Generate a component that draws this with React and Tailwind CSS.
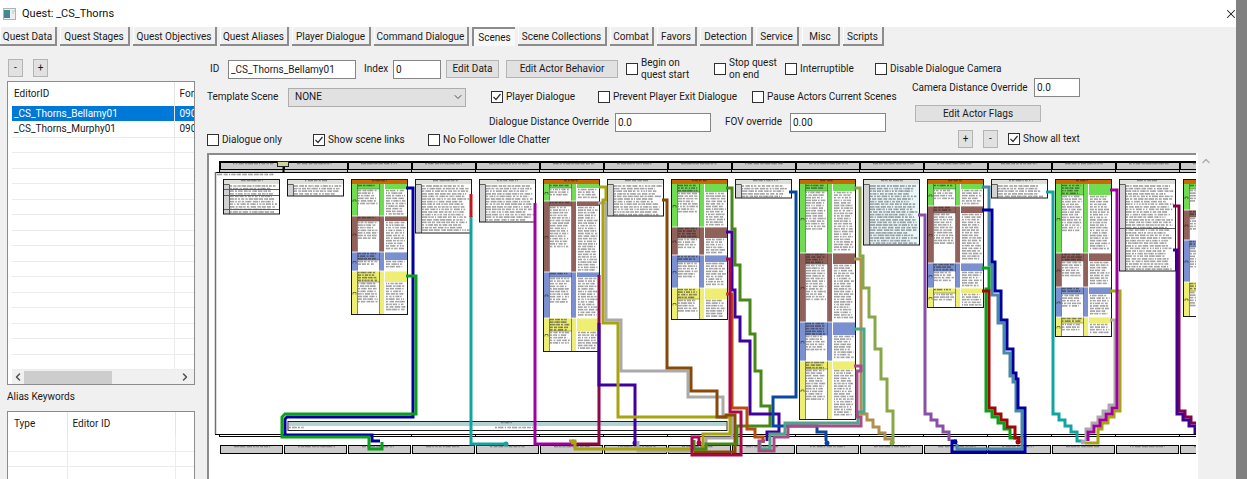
import { ChevronDown, ChevronLeft, ChevronRight, ChevronUp, X } from 'lucide-react'

const TABS = [
  { name: 'Quest Data', width: 'w-[57px]' },
  { name: 'Quest Stages', width: 'w-[70px]' },
  { name: 'Quest Objectives', width: 'w-[84px]' },
  { name: 'Quest Aliases', width: 'w-[69px]' },
  { name: 'Player Dialogue', width: 'w-[79px]' },
  { name: 'Command Dialogue', width: 'w-[95px]' },
  { name: 'Scenes', width: 'w-[43px]', active: true },
  { name: 'Scene Collections', width: 'w-[89px]' },
  { name: 'Combat', width: 'w-[44px]' },
  { name: 'Favors', width: 'w-[40px]' },
  { name: 'Detection', width: 'w-[53px]' },
  { name: 'Service', width: 'w-[43px]' },
  { name: 'Misc', width: 'w-[38px]' },
  { name: 'Scripts', width: 'w-[41px]' },
]

const SCENES = [
  { id: '_CS_Thorns_Bellamy01', form: '090', selected: true },
  { id: '_CS_Thorns_Murphy01', form: '090' },
]

const GREEN = '#70dc52'
const BROWN = '#90625a'
const BLUE = '#7b90d0'
const YELLOW = '#eeee74'
const CHOICE_COLORS = [GREEN, BROWN, BLUE, YELLOW]

const COLUMN = 64
const NODE_TOP = 179

// One node per phase. A node with rows is a player choice: [top, strip bottom] for each colour.
const NODES = [
  { bottom: 214, dividers: [189, 195, 209] },
  { bottom: 196 },
  { bottom: 314, rows: [[184, 189], [216, 221], [252, 260], [271, 282]] },
  { bottom: 233 },
  { bottom: 222 },
  { bottom: 351, rows: [[184, 188], [201, 206], [272, 277], [318, 331]] },
  { bottom: 216 },
  { bottom: 319, rows: [[184, 192], [227, 238], [255, 262], [288, 299]] },
  { bottom: 198 },
  { bottom: 419, rows: [[184, 191], [253, 264], [322, 335], [361, 369]] },
  { bottom: 245, tint: '#e9f6fa' },
  { bottom: 307, rows: [[184, 189], [206, 213], [263, 271], [288, 293]] },
  { bottom: 198 },
  { bottom: 336, rows: [[184, 195], [253, 261], [287, 294], [317, 323]] },
  { bottom: 271, dividers: [228] },
  { bottom: 316, rows: [[184, 189], [210, 217], [240, 247], [282, 291]] },
]

const LINKS = [
  { color: '#0000a0', d: 'M406 188H413V417H287L285 419V435H372V441H380' },
  { color: '#0aa01a', d: 'M406 276H416V414H285L282 417V437H369V449H382V442' },
  { color: '#10a5a0', d: 'M471 216V444H504', end: [506, 444] },
  { color: '#c01818', d: 'M471 194V217' },
  { color: '#a000a0', d: 'M535 203V444H573', end: [572, 444] },
  { color: '#8c0848', d: 'M599 275V444H573' },
  { color: '#4000a0', d: 'M599 323V385H635V442', end: [635, 443] },
  { color: '#aaaaaa', d: 'M598 203H606V320H621V371H688V397H723V417H732V438H706V451H638V441' },
  { color: '#a8a410', d: 'M599 187H606V200H603V323H618V417H730V434H703V449H575V441H569', end: [573, 442] },
  { color: '#884808', d: 'M662 200H667V368H691V391H717V417H726V415H735V452H694' },
  { color: '#488818', d: 'M726 188H732V229H735V265H740V300H750V334H755V371H761V406H770V426H737V444H706V449H694V440' },
  { color: '#4000a0', d: 'M726 232H732V290H735V317H740V341H750V414H779V432H767V441' },
  { color: '#b84c10', d: 'M726 294H732V408H747V429H755V437H763V443' },
  { color: '#a80848', d: 'M726 259H730V412H741V455H692V437H699V443', end: [699, 443] },
  { color: '#0848a0', d: 'M789 192H796V397H773V426H817V432H826V441', end: [827, 443] },
  { color: '#b09050', d: 'M854 259H861V414H867V420H873V427H879V433H885V439H892V443' },
  { color: '#88a848', d: 'M854 188H860V256H863V288H869V317H875V349H881V379H887V411H893V443', end: [892, 443] },
  { color: '#48a888', d: 'M854 329H864V412H858V423H785V434H770V449H760V440' },
  { color: '#a84c88', d: 'M854 366H861V371H857V417H861V426H788V437H774V451H759V441H765' },
  { color: '#8850a8', d: 'M918 215H925V414H931V420H937V426H943V432H949V441' },
  { color: '#4888a8', d: 'M982 187H989V265H992V295H998V323H1004V353H1010V376H1013V382H1016V411H1022V449H957V444' },
  { color: '#0000a0', d: 'M982 210H992V262H995V291H1001V320H1007V349H1013V373H1016V379H1018V408H1025V452H952V441H957', end: [955, 442] },
  { color: '#0aa01a', d: 'M982 268H989V289H986V411H992V417H998V423H1004V429H1010V438H1018' },
  { color: '#a00808', d: 'M982 291H989V408H995V414H1001V420H1007V427H1015V438H1019V443', end: [1018, 442] },
  { color: '#10a5a0', d: 'M1046 192H1053V414H1059V420H1065V426H1071V432H1077V441H1082' },
  { color: '#a8a410', d: 'M1110 291H1120V411H1114V417H1108V423H1102V429H1098V443H1085' },
  { color: '#aaaaaa', d: 'M1110 320H1115V405H1109V411H1103V417H1098V423H1092V429H1086V441', end: [1083, 442] },
  { color: '#a000a0', d: 'M1110 190H1117V408H1112V414H1106V420H1100V426H1094V432H1088V441' },
  { color: '#8c0048', d: 'M1173 206H1179V411H1185V417H1191V423H1200' },
  { color: '#400090', d: 'M1173 250H1177V414H1183V420H1189V426H1195V434' },
]

function TitleBar() {
  return (
    <header className="flex h-[27px] shrink-0 items-center bg-white pl-[3px]">
      <svg className="h-3 w-[13px]" viewBox="0 0 13 12">
        <rect x="0.5" y="0.5" width="12" height="11" fill="#eef0f0" stroke="#aab4b8" />
        <rect x="1" y="2" width="6" height="8" fill="#3d8f86" />
        <rect x="1" y="6" width="6" height="4" fill="#4a8098" />
        <path d="M9 3h3M9 5h2" stroke="#b8c4c8" />
      </svg>
      <h1 className="ml-1.5 flex-1 text-[11px] text-[#111]">Quest: _CS_Thorns</h1>
      <button type="button" aria-label="Close" className="flex w-3 items-center overflow-hidden">
        <X className="size-3.5 shrink-0" strokeWidth={1.75} />
      </button>
    </header>
  )
}

function TabBar() {
  return (
    <nav className="flex h-[19px] shrink-0 gap-[3px]">
      {TABS.map((tab) => (
        <button
          key={tab.name}
          type="button"
          className={
            tab.active
              ? `${tab.width} shrink-0 whitespace-nowrap border-t-2 border-l-2 border-[#8c8c8c] bg-[#f8f8f8] pt-px`
              : `${tab.width} shrink-0 whitespace-nowrap border-r-2 border-b-2 border-[#8c8c8c] bg-[#f0f0f0] pt-0.5 shadow-[inset_1px_0_0_#ffffff]`
          }
        >
          {tab.name}
        </button>
      ))}
    </nav>
  )
}

function PushButton({ className, children }) {
  return (
    <button type="button" className={`${className} shrink-0 border border-[#b4b4b4] bg-[#e1e1e1] whitespace-nowrap`}>
      {children}
    </button>
  )
}

function Field({ label, value, labelWidth, width }) {
  return (
    <label className="flex shrink-0 items-center">
      <span className={`${labelWidth} whitespace-nowrap`}>{label}</span>
      <input
        type="text"
        defaultValue={value}
        className={`${width} h-[19px] border border-[#858585] bg-white px-0.5 outline-none`}
      />
    </label>
  )
}

function CheckBox({ label, checked, width }) {
  return (
    <label className={`${width} flex shrink-0 items-center gap-[3px] leading-3 whitespace-pre`}>
      <span className="grid size-3 shrink-0 place-items-center">
        <input
          type="checkbox"
          defaultChecked={checked}
          className="peer col-start-1 row-start-1 size-3 appearance-none border border-[#303030] bg-white"
        />
        <svg className="pointer-events-none invisible col-start-1 row-start-1 size-3 peer-checked:visible" viewBox="0 0 12 12">
          <path d="M2.5 6l2.5 2.5 4.5-5.5" fill="none" stroke="#303030" strokeWidth="1.2" />
        </svg>
      </span>
      {label}
    </label>
  )
}

function Sidebar() {
  return (
    <aside className="flex w-[195px] shrink-0 flex-col pl-[7px]">
      <div className="flex h-[35px] items-center gap-2.5 pt-2 pl-px">
        <PushButton className="h-[18px] w-[15px]">-</PushButton>
        <PushButton className="h-[18px] w-[15px]">+</PushButton>
      </div>

      <div className="flex h-[304px] flex-col overflow-hidden border border-[#8c8c8c] bg-white pl-1">
        <table className="w-full table-fixed border-collapse text-left">
          <thead>
            <tr className="h-6">
              <th className="w-[162px] border-r border-[#e4e4e4] pl-0.5 font-normal">EditorID</th>
              <th className="overflow-hidden pl-[5px] font-normal">For</th>
            </tr>
          </thead>
          <tbody>
            {SCENES.map((scene) => (
              <tr
                key={scene.id}
                className={scene.selected ? 'h-[15px] bg-[#0078d7] leading-[14px] text-white' : 'h-4 border-b border-[#ececec] leading-[14px]'}
              >
                <td className="overflow-hidden border-r border-[#e4e4e4] pl-0.5">{scene.id}</td>
                <td className="overflow-hidden pl-[5px]">{scene.form}</td>
              </tr>
            ))}
            {Array.from({ length: 15 }, (_, i) => (
              <tr key={i} className="border-b border-[#ececec] odd:h-[15px] even:h-4">
                <td className="border-r border-[#ececec]" />
                <td />
              </tr>
            ))}
          </tbody>
        </table>
        <div className="mt-auto flex h-[15px] shrink-0 items-center bg-[#f0f0f0]">
          <ChevronLeft className="size-3 text-[#505050]" strokeWidth={3} />
          <div className="h-[13px] w-[88px] bg-[#cdcdcd]" />
          <ChevronRight className="mr-[3px] ml-auto size-3 text-[#505050]" strokeWidth={3} />
        </div>
      </div>

      <h2 className="h-[26px] shrink-0 pt-[5px]">Alias Keywords</h2>

      <div className="min-h-0 flex-1 overflow-hidden border border-b-0 border-[#8c8c8c] bg-white">
        <table className="w-full table-fixed border-collapse text-left">
          <thead>
            <tr className="h-6">
              <th className="w-[59px] border-r border-[#e4e4e4] pl-1.5 font-normal">Type</th>
              <th className="w-[108px] border-r border-[#e4e4e4] pl-[5px] font-normal">Editor ID</th>
              <th />
            </tr>
          </thead>
          <tbody>
            {Array.from({ length: 3 }, (_, i) => (
              <tr key={i} className="h-[15px] border-b border-[#ececec]">
                <td className="border-r border-[#ececec]" />
                <td className="border-r border-[#ececec]" />
                <td />
              </tr>
            ))}
          </tbody>
        </table>
      </div>
    </aside>
  )
}

function SceneForm() {
  return (
    <form className="shrink-0 pl-3">
      <div className="flex h-[46px] items-center">
        <div className="flex w-[239px] shrink-0 items-center gap-2 pl-[3px]">
          <Field label="ID" value="_CS_Thorns_Bellamy01" labelWidth="w-[18px]" width="w-32" />
          <Field label="Index" value="0" labelWidth="w-[29px]" width="w-12" />
        </div>
        <PushButton className="mr-[7px] h-[18px] w-[53px]">Edit Data</PushButton>
        <PushButton className="mr-2 h-[18px] w-[112px]">Edit Actor Behavior</PushButton>
        <CheckBox label={'Begin on\nquest start'} width="w-[88px]" />
        <CheckBox label={'Stop quest\non end'} width="w-[71px]" />
        <CheckBox label="Interruptible" width="w-[90px]" />
        <CheckBox label="Disable Dialogue Camera" width="w-[140px]" />
      </div>

      <div className="-mt-3.5 flex h-[75px]">
        <div className="w-[705px] shrink-0">
          <div className="flex h-[38px] items-center">
            <label className="flex w-[284px] shrink-0 items-center">
              <span className="w-[81px]">Template Scene</span>
              <span className="grid">
                <select className="col-start-1 row-start-1 h-[19px] w-[178px] appearance-none border border-[#adadad] bg-[#e1e1e1] px-1.5">
                  <option>NONE</option>
                </select>
                <ChevronDown className="pointer-events-none col-start-1 row-start-1 mr-0.5 size-3 self-center justify-self-end text-[#505050]" strokeWidth={2} />
              </span>
            </label>
            <CheckBox label="Player Dialogue" checked width="w-[107px]" />
            <CheckBox label="Prevent Player Exit Dialogue" width="w-[154px]" />
            <CheckBox label="Pause Actors Current Scenes" width="w-[150px]" />
          </div>
          <div className="flex h-3 items-center gap-3.5 pl-[282px]">
            <Field label="Dialogue Distance Override" value="0.0" labelWidth="w-[126px]" width="w-24" />
            <Field label="FOV override" value="0.00" labelWidth="w-[65px]" width="w-24" />
          </div>
          <div className="flex h-6 items-center">
            <CheckBox label="Dialogue only" width="w-[106px]" />
            <CheckBox label="Show scene links" checked width="w-[115px]" />
            <CheckBox label="No Follower Idle Chatter" width="w-[130px]" />
          </div>
        </div>
        <div className="flex shrink-0 flex-col gap-2">
          <Field label="Camera Distance Override" value="0.0" labelWidth="w-[122px]" width="w-[46px]" />
          <PushButton className="ml-[3px] h-[17px] w-[126px]">Edit Actor Flags</PushButton>
          <div className="flex items-center gap-2.5 pl-[46px]">
            <PushButton className="h-[18px] w-[15px]">+</PushButton>
            <PushButton className="h-[18px] w-[15px]">-</PushButton>
            <CheckBox label="Show all text" checked width="w-[80px]" />
          </div>
        </div>
      </div>
    </form>
  )
}

// Lines of dialogue at the zoomed-out scale, where words are only marks.
function Words({ x, y, width, bottom, seed = 1, color = '#505050' }) {
  let state = seed * 7919 + Math.round(x) * 31 + Math.round(y) * 17
  const next = () => {
    state = (state * 1103515245 + 12345) % 2147483648
    return state / 2147483648
  }
  let d = ''
  for (let row = y + 1.5; row < bottom - 1; row += 2.6) {
    const end = x + width - next() * width * 0.2
    let cx = x
    while (cx < end) {
      const word = Math.min(1 + next() * 5, end - cx)
      d += `M${cx.toFixed(1)} ${row.toFixed(1)}h${word.toFixed(1)}`
      cx += word + 0.8 + next() * 0.8
    }
  }
  return (
    <g fill="none" stroke={color}>
      <path d={d} strokeWidth="1.8" opacity="0.35" />
      <path d={d} strokeWidth="1.2" strokeDasharray="0.8 0.6 0.5 0.6 1.1 0.5" opacity="0.45" />
    </g>
  )
}

function DialogueNode({ x, node, index }) {
  const height = node.bottom - NODE_TOP
  return (
    <g>
      <rect x={x} y={NODE_TOP} width="55" height={height} fill="#fff" />
      {node.tint && <rect x={x + 5} y={NODE_TOP + 5} width="50" height={height - 5} fill={node.tint} />}
      <rect x={x} y={NODE_TOP} width="55" height="5" fill="#dfe0da" />
      <rect x={x} y={NODE_TOP + 5} width="5" height={height - 5} fill="#d2d2d2" />
      <path d={`M${x} 184.5h5.5V${node.bottom}`} fill="none" stroke="#606060" />
      <Words x={x + 17} y={NODE_TOP} width={25} bottom={183} seed={index + 3} />
      <Words x={x + 6} y={184.5} width={48} bottom={node.bottom} seed={index + 1} />
      {node.dividers?.map((y) => <path key={y} d={`M${x} ${y + 0.5}h55`} stroke="#606060" />)}
      <rect x={x - 0.5} y={NODE_TOP + 0.5} width="56" height={height - 0.5} fill="none" stroke="#181818" />
    </g>
  )
}

function ChoiceNode({ x, node, index }) {
  return (
    <g>
      <rect x={x} y={NODE_TOP} width="55" height={node.bottom - NODE_TOP} fill="#fff" />
      <rect x={x} y={NODE_TOP} width="55" height="5" fill="#c96b05" />
      <Words x={x + 20} y={NODE_TOP} width={15} bottom={183} seed={index} color="#402000" />
      {node.rows.map(([top, strip], i) => {
        const bottom = i < 3 ? node.rows[i + 1][0] : node.bottom
        const color = CHOICE_COLORS[i]
        return (
          <g key={top}>
            <rect x={x} y={top} width="55" height={strip - top} fill={color} />
            <rect x={x} y={top} width="5" height={bottom - top} fill={color} />
            <rect x={x + 28} y={top} width="4" height={bottom - top} fill={color} />
            <path d={`M${x + 5.5} ${top}V${bottom}M${x + 27.5} ${top}V${bottom}`} stroke="#505050" strokeWidth="0.7" />
            <path d={`M${x + 5} ${strip}h23`} stroke="#505050" strokeWidth="0.5" />
            <path d={`M${x + 32.5} ${top}V${bottom}`} stroke="#fff" />
            <Words x={x + 6} y={top} width={20} bottom={strip} seed={i + 2} color="#202020" />
            <Words x={x + 6} y={strip} width={20} bottom={Math.min(bottom, strip + (bottom - strip) * 0.65)} seed={i + 5} />
            <Words x={x + 34} y={strip} width={20} bottom={bottom - 1} seed={i + 9} />
            <path d={`M${x + 1} ${(top + bottom) / 2}h3m0 0v2m-3 -2v2`} fill="none" stroke="#303030" strokeWidth="0.6" />
            {i > 0 && <path d={`M${x} ${top}h55`} stroke="#fff" strokeWidth="0.8" />}
          </g>
        )
      })}
      <rect x={x - 0.5} y={NODE_TOP + 0.5} width="56" height={node.bottom - NODE_TOP} fill="none" stroke="#181818" />
    </g>
  )
}

function SceneGraph() {
  return (
    <svg className="block h-[324px] w-[987px]" viewBox="209 155 987 324" role="img" aria-label="Scene phases and links">
      <rect x="219" y="161" width="990" height="11" fill="#cbcbcb" />
      <path d="M219 162H1200" stroke="#000" strokeWidth="2" />
      <path d="M219 169.5H1200M215 172.5H1200" stroke="#000" />
      {NODES.map((_, i) => (
        <g key={i}>
          <path d={`M${220 + i * COLUMN} 161V170`} stroke="#000" strokeWidth="2" />
          <path d={`M${219.5 + i * COLUMN} 170V172`} stroke="#000" />
          <Words x={233 + i * COLUMN} y={162} width={42} bottom={165} seed={i + 1} />
        </g>
      ))}
      <path d="M283.5 166V172" stroke="#000" strokeWidth="2" />
      <rect x="277.5" y="161.5" width="11" height="5" fill="#ccd0a0" stroke="#202020" />

      <path d="M215.5 172V434" stroke="#707070" strokeWidth="1.5" />
      <path d="M215 434.5H1200M219 436.5H1200" stroke="#000" />
      <Words x={217} y={173} width={60} bottom={176} seed={4} />

      <rect x="288" y="421.5" width="439" height="9" fill="#fff" stroke="#202020" />
      <rect x="289" y="422" width="437" height="4" fill="#b4d2d3" />
      <Words x={289} y={426} width={16} bottom={429} />
      <Words x={495} y={426} width={40} bottom={429} seed={2} />
      <Words x={501} y={421} width={12} bottom={424} seed={3} />

      {NODES.map((_, i) => (
        <g key={i}>
          <rect x={220.5 + i * COLUMN} y="445.5" width="62" height="8" fill="#cbcbcb" stroke="#000" />
          <Words x={234 + i * COLUMN} y={445} width={38} bottom={448} seed={i + 1} />
          <path d={`M${219.5 + i * COLUMN} 434V437`} stroke="#000" />
        </g>
      ))}

      {NODES.map((node, i) => {
        const x = 224 + i * COLUMN
        return node.rows ? <ChoiceNode key={x} x={x} node={node} index={i} /> : <DialogueNode key={x} x={x} node={node} index={i} />
      })}

      {LINKS.map((link) => (
        <g key={link.d}>
          <path d={link.d} fill="none" stroke={link.color} strokeWidth="3" />
          {link.end && <circle cx={link.end[0]} cy={link.end[1]} r="2.5" fill={link.color} />}
        </g>
      ))}
    </svg>
  )
}

export default function App() {
  return (
    <div className="flex h-screen overflow-hidden bg-[#808080] font-[Roboto,sans-serif] text-[10px] leading-[14px] text-[#1a1a1a]">
      <div className="flex min-w-0 flex-1 flex-col overflow-hidden bg-[#f0f0f0]">
        <TitleBar />
        <TabBar />
        <div className="flex min-h-0 flex-1">
          <Sidebar />
          <main className="flex min-w-0 flex-1 flex-col overflow-hidden">
            <SceneForm />
            <div className="ml-3 flex min-h-0 flex-1">
              <div className="min-w-0 flex-1 overflow-hidden border-t-2 border-l-2 border-[#8c8c8c] bg-white">
                <SceneGraph />
              </div>
              <div className="w-10 shrink-0 border-l-2 border-white pt-0.5 pl-0.5">
                <ChevronUp className="size-3 text-[#b0b0b0]" strokeWidth={3} />
              </div>
            </div>
          </main>
        </div>
      </div>
      <div className="w-[11px] shrink-0" />
    </div>
  )
}
